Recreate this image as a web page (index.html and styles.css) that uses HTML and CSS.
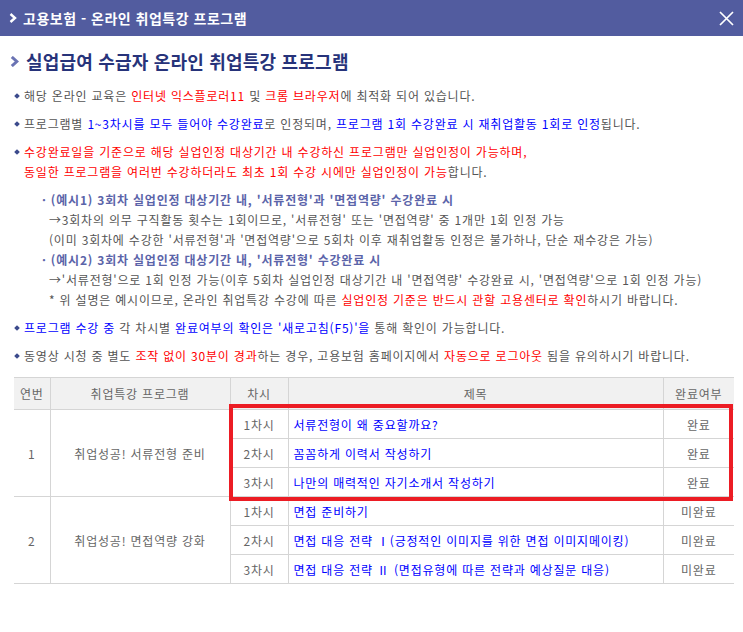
FILE: index.html
```html
<!DOCTYPE html>
<html lang="ko">
<head>
<meta charset="utf-8">
<title>고용보험 - 온라인 취업특강 프로그램</title>
<link rel="stylesheet" href="styles.css">
</head>
<body>
<div class="popup">
  <header class="topbar">
    <div class="topbar-title">
      <svg class="topbar-chev" width="8" height="10" viewBox="0 0 8 10"><polyline points="1.5,1 6,5 1.5,9" fill="none" stroke="#fff" stroke-width="2.4"/></svg>
      <span>고용보험 - 온라인 취업특강 프로그램</span>
    </div>
    <svg class="close" width="15" height="15" viewBox="0 0 15 15"><path d="M1 1L14 14M14 1L1 14" stroke="#fff" stroke-width="1.7" fill="none"/></svg>
  </header>

  <main class="content">
    <h1 class="page-title">
      <svg class="title-chev" width="9" height="11" viewBox="0 0 9 11"><polyline points="1.8,1 6.8,5.5 1.8,10" fill="none" stroke="#6a73b3" stroke-width="3"/></svg>
      <span>실업급여 수급자 온라인 취업특강 프로그램</span>
    </h1>

    <ul class="notes">
      <li>해당 온라인 교육은 <em class="red">인터넷 익스플로러11</em> 및 <em class="red">크롬 브라우저</em>에 최적화 되어 있습니다.</li>
      <li>프로그램별 <em class="blue">1~3차시를 모두 들어야 수강완료</em>로 인정되며, <em class="blue">프로그램 1회 수강완료 시 재취업활동 1회로 인정</em>됩니다.</li>
      <li>
        <em class="red">수강완료일을 기준으로 해당 실업인정 대상기간 내 수강하신 프로그램만 실업인정이 가능하며,</em><br>
        <em class="red">동일한 프로그램을 여러번 수강하더라도 최초 1회 수강 시에만 실업인정이 가능</em>합니다.
        <div class="examples">
          <p class="ex-head">· (예시1) 3회차 실업인정 대상기간 내, '서류전형'과 '면접역량' 수강완료 시</p>
          <p class="ex-line">→3회차의 의무 구직활동 횟수는 1회이므로, '서류전형' 또는 '면접역량' 중 1개만 1회 인정 가능</p>
          <p class="ex-line">(이미 3회차에 수강한 '서류전형'과 '면접역량'으로 5회차 이후 재취업활동 인정은 불가하나, 단순 재수강은 가능)</p>
          <p class="ex-head">· (예시2) 3회차 실업인정 대상기간 내, '서류전형' 수강완료 시</p>
          <p class="ex-line">→'서류전형'으로 1회 인정 가능(이후 5회차 실업인정 대상기간 내 '면접역량' 수강완료 시, '면접역량'으로 1회 인정 가능)</p>
          <p class="ex-line">* 위 설명은 예시이므로, 온라인 취업특강 수강에 따른 <em class="red">실업인정 기준은 반드시 관할 고용센터로 확인</em>하시기 바랍니다.</p>
        </div>
      </li>
      <li><em class="blue">프로그램 수강 중</em> 각 차시별 <em class="blue">완료여부의 확인은 '새로고침(F5)'을</em> 통해 확인이 가능합니다.</li>
      <li>동영상 시청 중 별도 <em class="red">조작 없이 30분이 경과</em>하는 경우, 고용보험 홈페이지에서 <em class="red">자동으로 로그아웃</em> 됨을 유의하시기 바랍니다.</li>
    </ul>

    <div class="table-wrap">
      <table class="course-table">
        <colgroup>
          <col class="c-no"><col class="c-prog"><col class="c-ses"><col class="c-title"><col class="c-done">
        </colgroup>
        <thead>
          <tr><th>연번</th><th>취업특강 프로그램</th><th>차시</th><th>제목</th><th>완료여부</th></tr>
        </thead>
        <tbody>
          <tr><td rowspan="3">1</td><td rowspan="3">취업성공! 서류전형 준비</td><td>1차시</td><td class="t">서류전형이 왜 중요할까요?</td><td>완료</td></tr>
          <tr><td>2차시</td><td class="t">꼼꼼하게 이력서 작성하기</td><td>완료</td></tr>
          <tr><td>3차시</td><td class="t">나만의 매력적인 자기소개서 작성하기</td><td>완료</td></tr>
          <tr><td rowspan="3">2</td><td rowspan="3">취업성공! 면접역량 강화</td><td>1차시</td><td class="t">면접 준비하기</td><td>미완료</td></tr>
          <tr><td>2차시</td><td class="t">면접 대응 전략 Ⅰ(긍정적인 이미지를 위한 면접 이미지메이킹)</td><td>미완료</td></tr>
          <tr><td>3차시</td><td class="t">면접 대응 전략 Ⅱ (면접유형에 따른 전략과 예상질문 대응)</td><td>미완료</td></tr>
        </tbody>
      </table>
      <div class="highlight"></div>
    </div>
  </main>
</div>
</body>
</html>
```

FILE: styles.css
```css
* { box-sizing: border-box; }
html, body { margin: 0; padding: 0; background: #fff; }
body {
  font-family: "Noto Sans CJK KR", "Noto Sans", sans-serif;
  font-size: 12px;
  letter-spacing: 0.8px;
  color: #555;
}
em { font-style: normal; }
.red { color: #ff0000; }
.blue { color: #0000ff; }

.topbar {
  height: 36px;
  background: #525c9f;
  display: flex;
  align-items: center;
  justify-content: space-between;
  padding: 0 9px 0 9px;
}
.topbar-title {
  display: flex;
  align-items: center;
  gap: 6px;
  color: #fff;
  font-size: 14px;
  font-weight: 700;
  letter-spacing: 0.5px;
}

.content { padding: 0 9px 0 14px; }

.page-title {
  margin: 0 0 0 -4px;
  height: 50px;
  display: flex;
  align-items: center;
  gap: 7px;
  font-size: 18px;
  font-weight: 700;
  letter-spacing: 0.2px;
  color: #27337a;
}

.notes {
  list-style: none;
  margin: 0;
  padding: 0;
}
.notes > li {
  position: relative;
  padding-left: 10px;
  line-height: 20px;
  margin-bottom: 8px;
}
.notes > li::before {
  content: "";
  position: absolute;
  left: 1px;
  top: 8px;
  width: 4px;
  height: 4px;
  background: #3b4a8c;
  transform: rotate(45deg);
}
.examples { margin-top: 8px; }
.examples p { margin: 0; line-height: 20px; }
.ex-head {
  padding-left: 18px;
  font-weight: 700;
  color: #5b64a9;
}
.ex-line { padding-left: 25px; }

.table-wrap { position: relative; margin-top: 11px; }
.course-table {
  width: 720px;
  border-collapse: collapse;
  table-layout: fixed;
  color: #666;
}
.c-no { width: 36px; }
.c-prog { width: 180px; }
.c-ses { width: 58px; }
.c-title { width: 375px; }
.c-done { width: 71px; }
.course-table th, .course-table td {
  border: 1px solid #d5d5d5;
  text-align: center;
  font-weight: 400;
  padding: 0;
  white-space: nowrap;
}
.course-table th:first-child, .course-table td:first-child { border-left: none; }
.course-table th:last-child, .course-table td:last-child { border-right: none; }
.course-table th { height: 32px; background: #f1f1f1; }
.course-table td { height: 29px; }
.course-table td.t { text-align: left; padding-left: 5px; color: #0000ff; }
.highlight {
  position: absolute;
  left: 215px;
  top: 27px;
  width: 504px;
  height: 97px;
  border: 4px solid #ec1c24;
  pointer-events: none;
}
```
